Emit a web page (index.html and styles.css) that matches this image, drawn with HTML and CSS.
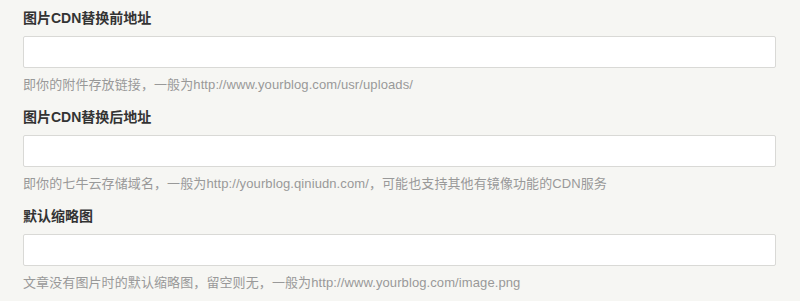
FILE: index.html
```html
<!DOCTYPE html>
<html lang="zh-CN">
<head>
    <meta charset="UTF-8">
    <meta name="viewport" content="width=device-width, initial-scale=1.0">
    <title>设置</title>
    <link rel="stylesheet" href="styles.css">
</head>
<body>

    <form class="options">
        <ul class="option">
            <li>
                <label class="option-label" for="cdn-before">图片CDN替换前地址</label>
                <input type="text" id="cdn-before" class="text">
                <p class="description">即你的附件存放链接，一般为http://www.yourblog.com/usr/uploads/</p>
            </li>
        </ul>
        <ul class="option">
            <li>
                <label class="option-label" for="cdn-after">图片CDN替换后地址</label>
                <input type="text" id="cdn-after" class="text">
                <p class="description">即你的七牛云存储域名，一般为http://yourblog.qiniudn.com/，可能也支持其他有镜像功能的CDN服务</p>
            </li>
        </ul>
        <ul class="option">
            <li>
                <label class="option-label" for="thumb">默认缩略图</label>
                <input type="text" id="thumb" class="text">
                <p class="description">文章没有图片时的默认缩略图，留空则无，一般为http://www.yourblog.com/image.png</p>
            </li>
        </ul>
    </form>

</body>
</html>
```

FILE: styles.css
```css
html, body {
    margin: 0;
    padding: 0;
}
body {
    font-family: "Liberation Sans", Arial, "Noto Sans CJK SC", sans-serif;
    font-size: 14px;
    line-height: 1.5;
    background-color: #f6f6f3;
    color: #444;
}
.options {
    padding: 8px 24px 0 23px;
}
.option {
    list-style: none;
    margin: 0 0 12.5px;
    padding: 0;
}
.option-label {
    display: block;
    font-weight: bold;
    color: #333;
    margin-bottom: 7px;
}
.text {
    display: block;
    box-sizing: border-box;
    width: 100%;
    height: 32px;
    margin: 0;
    padding: 5px;
    border: 1px solid #d9d9d6;
    border-radius: 2px;
    background: #fff;
    font-family: inherit;
    font-size: 14px;
}
.description {
    margin: 7px 0 0;
    font-size: 13px;
    letter-spacing: 0.1px;
    color: #999;
}
```
